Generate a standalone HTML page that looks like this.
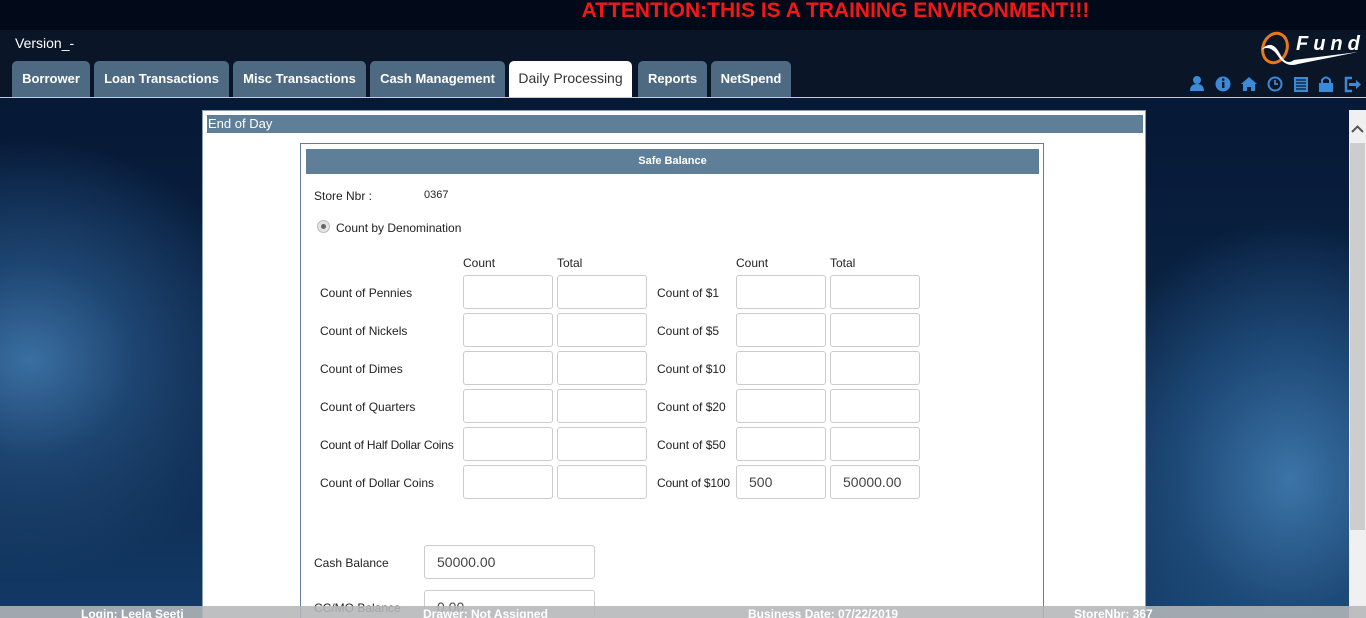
<!DOCTYPE html>
<html style="overflow:hidden;width:1366px;height:618px"><head><meta charset="utf-8"><style>
*{margin:0;padding:0;box-sizing:border-box}
body{width:1366px;height:618px;overflow:hidden;position:relative;font-family:"Liberation Sans",sans-serif;
background:radial-gradient(ellipse 240px 220px at 30px 360px,#3a6fa2 0%,#1d4470 45%,rgba(10,30,60,0) 100%),
radial-gradient(ellipse 220px 260px at 1290px 480px,#3c74a8 0%,#1e4a78 50%,rgba(10,30,60,0) 100%),
linear-gradient(#041530,#0b2445 60%,#123a66);}
.abs{position:absolute}
#top{left:0;top:0;width:1366px;height:30px;background:#020a1a}
#att{left:0;top:0;width:1366px;text-align:center;padding-left:305px;color:#f01818;font-weight:bold;font-size:21px;line-height:22px}
#hdr{left:0;top:30px;width:1366px;height:67px;background:#0a1628}
#line{left:0;top:97px;width:1366px;height:1px;background:#c8ccd2}
.tab{position:absolute;top:61px;height:36px;background:#4e6a82;border-radius:5px 5px 0 0;color:#fff;font-weight:bold;font-size:13px;line-height:35px;text-align:center}
.tab.act{background:#fff;color:#333;font-weight:normal;font-size:14px}
#panel{left:202px;top:110px;width:944px;height:508px;background:#fff;border:1px solid #8aa0b4;border-bottom:none}
#eod{left:207px;top:115px;width:936px;height:18px;background:#5f7f98;color:#fff;font-size:13px;line-height:18px;padding-left:1px}
#inner{left:300px;top:143px;width:744px;height:475px;border:1px solid #5f7f98;border-bottom:none}
#sb{left:306px;top:149px;width:733px;height:25px;background:#5f7f98;color:#fff;font-size:11px;font-weight:bold;text-align:center;line-height:25px}
.t{position:absolute;font-size:12px;color:#222}
.in{position:absolute;width:90px;height:34px;border:1px solid #ccc;border-radius:3px;background:#fff;font-size:14px;color:#444;padding-left:12px;line-height:32px}
#scroll{left:1349px;top:110px;width:17px;height:508px;background:#f0f0f0}
#thumb{left:1350px;top:143px;width:15px;height:387px;background:#cdcdcd}
#foot{left:0;top:606px;width:1366px;height:12px;background:rgba(180,182,184,.88);color:#fff;font-weight:bold;font-size:12px;line-height:16px;overflow:hidden}
</style></head><body>
<div class="abs" id="top"></div>
<div class="abs" id="att">ATTENTION:THIS IS A TRAINING ENVIRONMENT!!!</div>
<div class="abs" id="hdr"></div>
<div class="abs" style="left:15px;top:35px;color:#fff;font-size:14px">Version_-</div>
<svg class="abs" style="left:1258px;top:30px" width="106" height="40" viewBox="0 0 106 40">
<ellipse cx="17" cy="18" rx="12" ry="15" transform="rotate(20 17 18)" fill="none" stroke="#e87818" stroke-width="3"/>
<path d="M3 20 Q14 8 22 24 Q28 36 36 30 L100 22 L40 34 Q28 38 20 26 Q12 14 3 20Z" fill="#fff"/>
<text x="38" y="20" fill="#fff" font-size="20" font-style="italic" font-weight="bold" letter-spacing="5" font-family="Liberation Sans">Fund</text>
</svg>
<svg class="abs" style="left:1188px;top:75px" width="176" height="18" viewBox="0 0 176 18" fill="#3a8ad8">
<circle cx="9" cy="5" r="4"/><path d="M2 16 Q2 9 9 9 Q16 9 16 16Z"/>
<circle cx="35" cy="9" r="7.5"/><rect x="34" y="7" width="2.4" height="6" fill="#0a1628"/><circle cx="35.2" cy="4.6" r="1.3" fill="#0a1628"/>
<path d="M53 9 L61 2 L69 9 L67 9 L67 16 L63 16 L63 12 L59 12 L59 16 L55 16 L55 9Z"/>
<circle cx="87" cy="9" r="6.5" fill="none" stroke="#3a8ad8" stroke-width="2"/><path d="M87 5 V9 H90" stroke="#3a8ad8" stroke-width="1.8" fill="none"/>
<rect x="106" y="2" width="14" height="15"/><path d="M108 5h10M108 8h10M108 11h10M108 14h10" stroke="#0a1628" stroke-width="1.2"/>
<rect x="131" y="8" width="14" height="9"/><path d="M134 8 V5 Q138 0 142 5 V8" stroke="#3a8ad8" stroke-width="2" fill="none"/>
<path d="M164 3 H158 V16 H164" stroke="#3a8ad8" stroke-width="2.5" fill="none"/><path d="M161 8 H168 V5 L173 9.5 L168 14 V11 H161Z"/>
</svg>
<div class="tab" style="left:12px;width:78px">Borrower</div>
<div class="tab" style="left:94px;width:135px">Loan Transactions</div>
<div class="tab" style="left:233px;width:133px">Misc Transactions</div>
<div class="tab" style="left:370px;width:135px">Cash Management</div>
<div class="tab act" style="left:509px;width:123px">Daily Processing</div>
<div class="tab" style="left:638px;width:69px">Reports</div>
<div class="tab" style="left:711px;width:80px">NetSpend</div>
<div class="abs" id="line"></div>
<div class="abs" id="panel"></div>
<div class="abs" id="eod">End of Day</div>
<div class="abs" id="inner"></div>
<div class="abs" id="sb">Safe Balance</div>
<div class="t" style="left:314px;top:189px">Store Nbr :</div>
<div class="t" style="left:424px;top:189px;font-size:11px">0367</div>
<div class="abs" style="left:317px;top:220px;width:13px;height:13px;border-radius:50%;background:#e4e4e4;border:1px solid #bbb"><div style="margin:3px;width:5px;height:5px;border-radius:50%;background:#666"></div></div>
<div class="t" style="left:336px;top:221px">Count by Denomination</div>
<div class="t" style="left:463px;top:256px">Count</div><div class="t" style="left:557px;top:256px">Total</div>
<div class="t" style="left:736px;top:256px">Count</div><div class="t" style="left:830px;top:256px">Total</div>
<div class="t" style="left:320px;top:286px">Count of Pennies</div>
<div class="t" style="left:320px;top:324px">Count of Nickels</div>
<div class="t" style="left:320px;top:362px">Count of Dimes</div>
<div class="t" style="left:320px;top:400px">Count of Quarters</div>
<div class="t" style="left:320px;top:438px;letter-spacing:-0.2px">Count of Half Dollar Coins</div>
<div class="t" style="left:320px;top:476px">Count of Dollar Coins</div>
<div class="t" style="left:657px;top:286px">Count of $1</div>
<div class="t" style="left:657px;top:324px">Count of $5</div>
<div class="t" style="left:657px;top:362px">Count of $10</div>
<div class="t" style="left:657px;top:400px">Count of $20</div>
<div class="t" style="left:657px;top:438px">Count of $50</div>
<div class="t" style="left:657px;top:476px;letter-spacing:-0.2px">Count of $100</div>
<div class="in" style="left:463px;top:275px"></div><div class="in" style="left:557px;top:275px"></div><div class="in" style="left:736px;top:275px"></div><div class="in" style="left:830px;top:275px"></div>
<div class="in" style="left:463px;top:313px"></div><div class="in" style="left:557px;top:313px"></div><div class="in" style="left:736px;top:313px"></div><div class="in" style="left:830px;top:313px"></div>
<div class="in" style="left:463px;top:351px"></div><div class="in" style="left:557px;top:351px"></div><div class="in" style="left:736px;top:351px"></div><div class="in" style="left:830px;top:351px"></div>
<div class="in" style="left:463px;top:389px"></div><div class="in" style="left:557px;top:389px"></div><div class="in" style="left:736px;top:389px"></div><div class="in" style="left:830px;top:389px"></div>
<div class="in" style="left:463px;top:427px"></div><div class="in" style="left:557px;top:427px"></div><div class="in" style="left:736px;top:427px"></div><div class="in" style="left:830px;top:427px"></div>
<div class="in" style="left:463px;top:465px"></div><div class="in" style="left:557px;top:465px"></div><div class="in" style="left:736px;top:465px">500</div><div class="in" style="left:830px;top:465px">50000.00</div>
<div class="t" style="left:314px;top:556px">Cash Balance</div>
<div class="in" style="left:424px;top:545px;width:171px">50000.00</div>
<div class="t" style="left:314px;top:601px">CC/MO Balance</div>
<div class="in" style="left:424px;top:590px;width:171px;height:28px;border-bottom:none">0.00</div>
<div class="abs" id="scroll"></div>
<div class="abs" id="thumb"></div>
<svg class="abs" style="left:1351px;top:124px" width="13" height="10"><path d="M1 8 L6.5 2.5 L12 8" stroke="#555" stroke-width="2" fill="none"/></svg>
<div class="abs" id="foot">
<span class="abs" style="left:81px;top:0">Login: Leela Seeti</span>
<span class="abs" style="left:423px;top:0">Drawer: Not Assigned</span>
<span class="abs" style="left:748px;top:0">Business Date: 07/22/2019</span>
<span class="abs" style="left:1074px;top:0">StoreNbr: 367</span>
</div>
</body></html>
